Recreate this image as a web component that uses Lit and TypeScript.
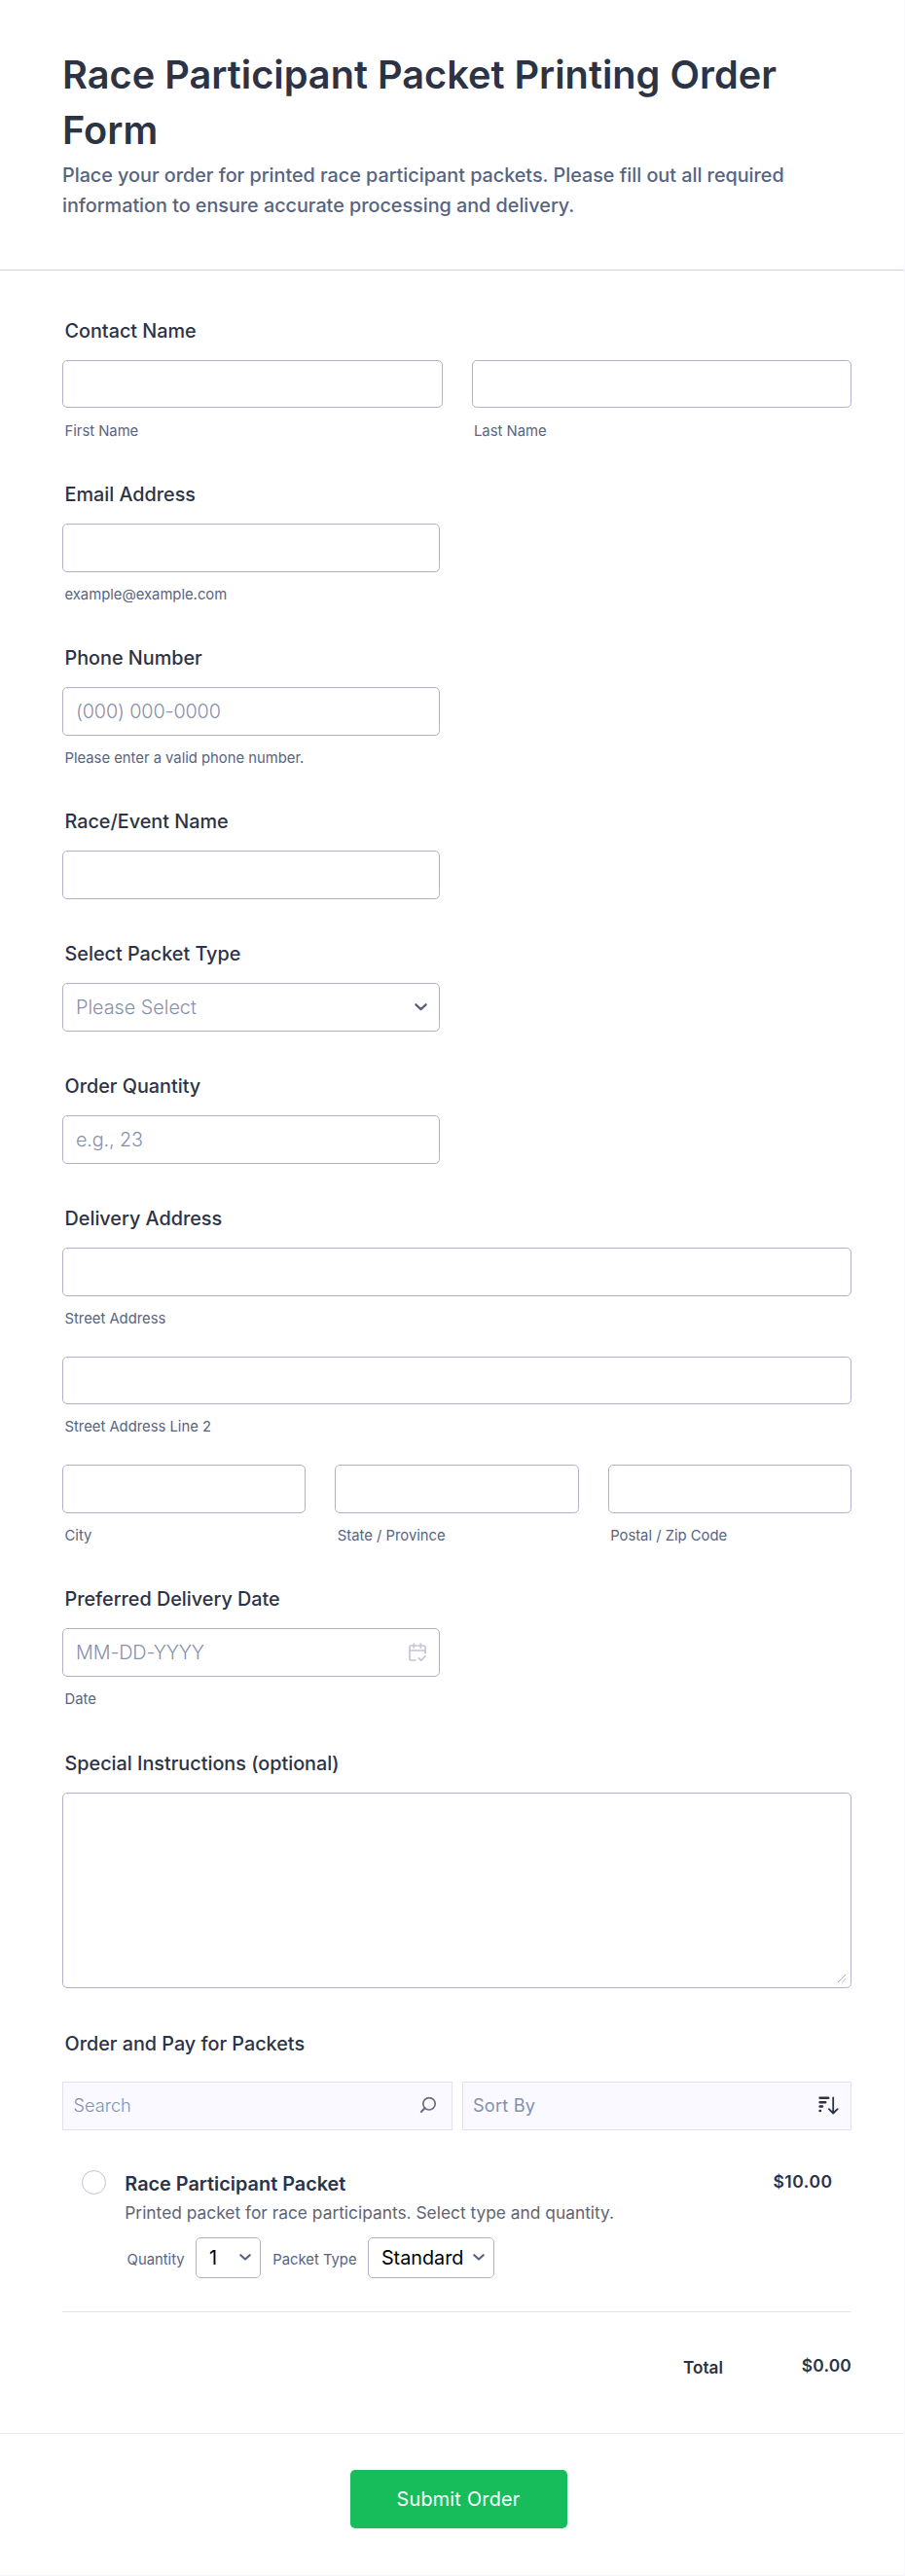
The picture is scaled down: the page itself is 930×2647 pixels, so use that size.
import { LitElement, html, css, svg } from "lit";
import { customElement, property } from "lit/decorators.js";

const chevron = (size: number) => html`<svg class="chevron" width=${size} height=${size * 0.6} viewBox="0 0 12 7.2" fill="none">
  <path d="M1.3 1.2 6 5.6l4.7-4.4" stroke="#57607f" stroke-width="2.1" stroke-linecap="round" stroke-linejoin="round"/>
</svg>`;

const calendar = svg`<svg width="18" height="20" viewBox="0 0 18 20" fill="none" stroke="#c3c5d8" stroke-width="1.7" stroke-linecap="round" stroke-linejoin="round">
  <path d="M6.8 18H2.8A1.8 1.8 0 0 1 1 16.2V4.8A1.8 1.8 0 0 1 2.8 3h12.4A1.8 1.8 0 0 1 17 4.8v6M1 8h16M5.3 1v4M12.3 1v4M10.4 15.8l2.4 2.4 4.2-4.6"/>
</svg>`;

const magnifier = svg`<svg width="18" height="18" viewBox="0 0 18 18" fill="none" stroke="#706a7c" stroke-linecap="round">
  <circle cx="10" cy="7.8" r="6.2" stroke-width="1.7"/><path d="M5.6 12.2 1.9 15.9" stroke-width="2.1"/>
</svg>`;

const sortIcon = svg`<svg width="21" height="19" viewBox="0 0 21 19" fill="none" stroke="#2c3345" stroke-linecap="round" stroke-linejoin="round">
  <path d="M1.6 1.8h8.6M1.6 6.2h5.6M1.6 10.6h2.4M1.6 14.9h.4" stroke-width="2.5"/>
  <path d="M15.2 1.4v16M10.8 13.2l4.4 4.3 4.5-4.3" stroke-width="1.8"/>
</svg>`;

const shared = css`
  * { box-sizing: border-box; }
  input, select, textarea {
    display: block; width: 100%; height: 49.5px; margin: 0; padding: 0 13px;
    border: 1px solid #b0b3c8; border-radius: 5px; background: #fff;
    font: 300 19.8px Inter, sans-serif; color: #2c3345; outline: none; appearance: none;
  }
  ::placeholder { color: #8591ab; opacity: 1; letter-spacing: -.12px; }
`;

@customElement("form-field")
class FormField extends LitElement {
  @property() label = "";
  static styles = css`
    :host { display: block; }
    .label { height: 24px; margin: 0 0 18px; padding-left: 2.5px; font-size: 19.8px; line-height: 25.4px; font-weight: 500; color: #2c3345; white-space: nowrap; }
  `;
  render() {
    return html`<div class="label">${this.label}</div><slot></slot>`;
  }
}

@customElement("sub-input")
class SubInput extends LitElement {
  @property() hint = "";
  @property() placeholder = "";
  @property() icon = "";
  static styles = [shared, css`
    :host { display: block; }
    .box { display: grid; align-items: center; }
    .box > * { grid-area: 1 / 1; }
    .icon { justify-self: end; display: flex; margin-right: 14.5px; z-index: 1; }
    .hint { height: 18px; margin-top: 14.2px; padding-left: 2.5px; font-size: 14.8px; line-height: 18.4px; color: #57647e; white-space: nowrap; }
  `];
  render() {
    return html`
      <div class="box">
        <input placeholder=${this.placeholder} />
        ${this.icon === "calendar" ? html`<span class="icon">${calendar}</span>` : ""}
      </div>
      ${this.hint ? html`<div class="hint">${this.hint}</div>` : ""}`;
  }
}

@customElement("app-root")
class AppRoot extends LitElement {
  static styles = [shared, css`
    :host { display: block; font-family: Inter, sans-serif; color: #2c3345; background: #fff; height: 2647px; box-sizing: border-box; border-right: 1px solid #f6f6fc; border-bottom: 1px solid #f3f3fe; }
    .header { height: 278px; padding: 49px 53px 0 64px; border-bottom: 1px solid #d3d4e2; }
    h1 { margin: 0; font-size: 39.72px; line-height: 57px; font-weight: 600; color: #2c3345; }
    .subtitle { margin-top: 1.5px; font-size: 19.78px; line-height: 31.1px; font-weight: 500; color: #57647e; letter-spacing: -0.01px; }
    .fields { height: 2222px; padding: 49.9px 54px 0 64px; display: flex; flex-direction: column; gap: 44.45px; }
    .half { width: 388px; }
    .two { display: grid; grid-template-columns: 1fr 1fr; gap: 30px; }
    .three { display: grid; grid-template-columns: repeat(3, 1fr); gap: 30px; }
    .stack { display: grid; gap: 29.95px; }
    .select { display: grid; align-items: center; }
    .select > * { grid-area: 1 / 1; }
    .select .chevron { justify-self: end; margin-right: 13px; z-index: 1; }
    .select select { color: #8591ab; }
    textarea { height: 201.6px; resize: none; }
    .area { display: grid; }
    .area > * { grid-area: 1 / 1; }
    .grip { place-self: end; margin: 0 5px 5px 0; z-index: 1; }
    .tools { display: grid; grid-template-columns: 1fr 1fr; gap: 10px; margin-top: 27.5px; }
    .tool { display: flex; align-items: center; justify-content: space-between; height: 49.5px; padding: 0 12px 1.4px 10.5px; border: 1px solid #e0e1ed; background: #faf9ff; color: #8591ab; font-size: 18.2px; line-height: 24px; }
    .tool:last-child { letter-spacing: .2px; }
    .tool.search { font-weight: 300; padding-right: 15px; }
    .tool svg { display: block; }
    .product { height: 187px; display: flex; align-items: flex-start; padding: 41.6px 20px 0; border-bottom: 1px solid #e0e1ed; }
    .radio { flex: none; width: 25px; height: 25px; border: 1px solid #c0c3d4; border-radius: 50%; background: #fff; }
    .details { flex: 1; margin-left: 19.3px; }
    .name { height: 28px; font-size: 19.85px; line-height: 28px; font-weight: 600; }
    .desc { height: 28px; margin-top: 2px; font-size: 17.35px; line-height: 28px; color: #5f6474; white-space: nowrap; }
    .options { display: flex; align-items: center; margin-top: 10.8px; padding-left: 2.3px; font-size: 14.8px; color: #57647e; white-space: nowrap; }
    .options .select { margin-left: 11.4px; }
    .options select { height: 41.5px; font-weight: 400; color: #000; }
    .options .select .chevron { margin: -1px 10px 0 0; }
    .optlabel { padding-top: 4px; }
    .qty { width: 66.7px; margin-right: 12.6px; }
    .type { width: 130px; }
    .price { font-size: 17.5px; line-height: 24px; font-weight: 600; letter-spacing: .5px; margin: -.5px -.5px 0 0; }
    .total { display: flex; justify-content: flex-end; padding-top: 42.9px; font-size: 17.2px; line-height: 24px; font-weight: 600; }
    .total span { padding-top: 2px; }
    .total b { width: 132px; text-align: right; font-weight: 600; font-size: 17.4px; letter-spacing: .2px; }
    .footer { border-top: 1px solid #ebebf4; padding-top: 37px; display: flex; justify-content: center; }
    button { width: 223px; height: 59.6px; margin: 0 0 0 13px; padding: 0; border: 0; border-radius: 5px; background: #18bd5b; color: #fff; font: 400 19.8px Inter, sans-serif; letter-spacing: .25px; }
  `];

  render() {
    return html`
      <header class="header">
        <h1>Race Participant Packet Printing Order Form</h1>
        <div class="subtitle">Place your order for printed race participant packets. Please fill out all required information to ensure accurate processing and delivery.</div>
      </header>
      <main class="fields">
        <form-field label="Contact Name"><div class="two">
          <sub-input hint="First Name"></sub-input><sub-input hint="Last Name"></sub-input>
        </div></form-field>
        <form-field label="Email Address"><sub-input class="half" hint="example@example.com"></sub-input></form-field>
        <form-field label="Phone Number"><sub-input class="half" placeholder="(000) 000-0000" hint="Please enter a valid phone number."></sub-input></form-field>
        <form-field label="Race/Event Name"><sub-input class="half"></sub-input></form-field>
        <form-field label="Select Packet Type"><div class="select half">
          <select><option>Please Select</option></select>${chevron(13)}
        </div></form-field>
        <form-field label="Order Quantity"><sub-input class="half" placeholder="e.g., 23"></sub-input></form-field>
        <form-field label="Delivery Address"><div class="stack">
          <sub-input hint="Street Address"></sub-input>
          <sub-input hint="Street Address Line 2"></sub-input>
          <div class="three">
            <sub-input hint="City"></sub-input><sub-input hint="State / Province"></sub-input><sub-input hint="Postal / Zip Code"></sub-input>
          </div>
        </div></form-field>
        <form-field label="Preferred Delivery Date"><sub-input class="half" placeholder="MM-DD-YYYY" hint="Date" icon="calendar"></sub-input></form-field>
        <form-field label="Special Instructions (optional)"><div class="area">
          <textarea></textarea>
          <svg class="grip" width="10" height="10" viewBox="0 0 10 10" stroke="#b4b4c0" fill="none"><path d="M.8 9.2 9 1M5.2 9.2 9 5.4"/></svg>
        </div></form-field>
        <form-field label="Order and Pay for Packets">
          <div class="tools">
            <div class="tool search"><span>Search</span>${magnifier}</div>
            <div class="tool"><span>Sort By</span>${sortIcon}</div>
          </div>
          <div class="product">
            <div class="radio"></div>
            <div class="details">
              <div class="name">Race Participant Packet</div>
              <div class="desc">Printed packet for race participants. Select type and quantity.</div>
              <div class="options">
                <span class="optlabel">Quantity</span>
                <div class="select qty"><select><option>1</option></select>${chevron(12)}</div>
                <span class="optlabel">Packet Type</span>
                <div class="select type"><select><option>Standard</option></select>${chevron(12)}</div>
              </div>
            </div>
            <div class="price">$10.00</div>
          </div>
          <div class="total"><span>Total</span><b>$0.00</b></div>
        </form-field>
      </main>
      <footer class="footer"><button>Submit Order</button></footer>`;
  }
}
